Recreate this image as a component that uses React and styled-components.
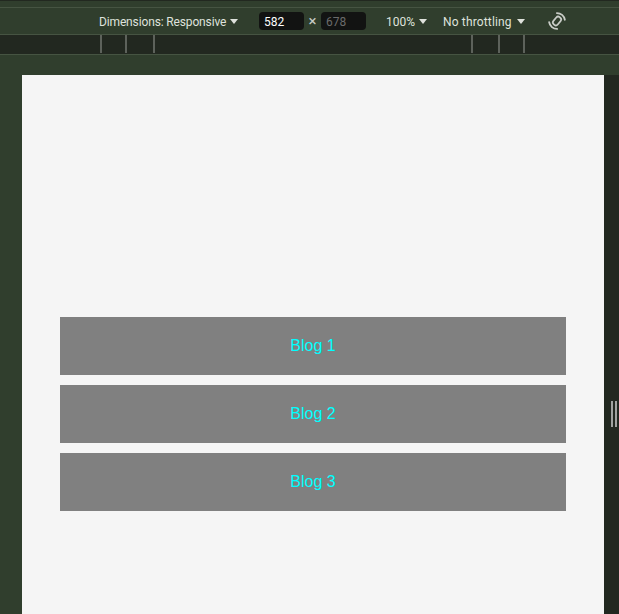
import React from "react";
import styled, { createGlobalStyle } from "styled-components";

const Global = createGlobalStyle`
  html, body { margin: 0; padding: 0; height: 100%; overflow: hidden; background: #303e2d; }
  #root { height: 100%; }
`;

const Shell = styled.div`
  width: 619px;
  height: 614px;
  display: flex;
  flex-direction: column;
  overflow: hidden;
  background: #303e2d;
  font-family: Roboto, "Noto Sans", sans-serif;
`;

const TopStrip = styled.div`
  height: 6px;
  flex: none;
  background: #303e2d;
  border-top: 1px solid #222820;
  border-bottom: 1px solid #465442;
`;

const Toolbar = styled.div`
  height: 26px;
  flex: none;
  display: flex;
  align-items: center;
  padding-left: 99px;
  color: #dfe2dc;
  font-size: 12px;
  border-bottom: 1px solid #465442;
`;

const Menu = styled.span`
  display: inline-flex;
  align-items: center;
  width: ${(p) => p.$width}px;
  margin-left: ${(p) => p.$gap || 0}px;
  flex: none;
  justify-content: space-between;
  white-space: nowrap;
  letter-spacing: ${(p) => p.$track || 0}px;
`;

const MenuLabel = styled.span`
  padding-top: 2px;
`;

const Caret = styled.span`
  width: 0;
  height: 0;
  flex: none;
  border-left: 4px solid transparent;
  border-right: 4px solid transparent;
  border-top: 5px solid #dfe2dc;
`;

const SizeBox = styled.span`
  width: 45px;
  height: 18px;
  flex: none;
  box-sizing: border-box;
  padding: 1px 0 0 5px;
  margin-left: ${(p) => p.$gap || 0}px;
  display: flex;
  align-items: center;
  border-radius: 4px;
  background: #121312;
  color: ${(p) => (p.$dim ? "#6b6b6b" : "#ffffff")};
`;

const Times = styled.span`
  width: 17px;
  flex: none;
  text-align: center;
  color: #c8ccc6;
  font-size: 15px;
`;

const RotateIcon = styled.svg`
  width: 20px;
  height: 20px;
  margin-left: 22px;
  flex: none;
`;

const Ruler = styled.div`
  height: 19px;
  flex: none;
  position: relative;
  background: #222820;
  border-bottom: 1px solid #465442;
`;

const Tick = styled.span`
  position: absolute;
  top: 0;
  bottom: 1px;
  width: 2px;
  background: #5d625b;
`;

const Stage = styled.div`
  flex: 1;
  min-height: 0;
  display: flex;
  align-items: flex-start;
  padding-top: 20px;
  padding-left: 22px;
`;

const Page = styled.div`
  width: 582px;
  height: 678px;
  flex: none;
  display: flex;
  flex-direction: column;
  gap: 10px;
  box-sizing: border-box;
  padding: 242px 38px 0;
  background: #f5f5f5;
`;

const Blog = styled.a`
  height: 58px;
  flex: none;
  display: flex;
  align-items: center;
  justify-content: center;
  background: #808080;
  color: #00ffff;
  font-family: "Liberation Sans", Arial, sans-serif;
  font-size: 16px;
`;

const Handle = styled.div`
  flex: 1;
  height: 678px;
  display: flex;
  align-items: center;
  justify-content: flex-end;
  gap: 2px;
  padding-right: 2px;
  background: #222820;
`;

const Grip = styled.span`
  width: 2px;
  height: 26px;
  background: #a0a3a0;
`;

export default function App() {
  return (
    <Shell>
      <Global />
      <TopStrip />
      <Toolbar>
        <Menu $width={139} $track={-0.14}><MenuLabel>Dimensions: Responsive</MenuLabel><Caret /></Menu>
        <SizeBox $gap={21}>582</SizeBox>
        <Times>×</Times>
        <SizeBox $dim>678</SizeBox>
        <Menu $gap={20} $width={41}><MenuLabel>100%</MenuLabel><Caret /></Menu>
        <Menu $gap={16} $width={82} $track={0.15}><MenuLabel>No throttling</MenuLabel><Caret /></Menu>
        <RotateIcon viewBox="0 0 20 20" fill="none" stroke="#c9ccc7" strokeLinecap="round">
          <g transform="rotate(40 10 10)">
            <rect x="7.2" y="5.4" width="5.6" height="9.2" rx="2.4" strokeWidth="1.7" />
            <path d="M4.8 4A8 8 0 0 1 15.2 4" strokeWidth="1.8" />
            <path d="M4.8 16A8 8 0 0 0 15.2 16" strokeWidth="1.8" />
          </g>
        </RotateIcon>
      </Toolbar>
      <Ruler>
        {[100, 125, 153, 471, 498, 523].map((x) => (
          <Tick key={x} style={{ left: x }} />
        ))}
      </Ruler>
      <Stage>
        <Page>
          <Blog>Blog 1</Blog>
          <Blog>Blog 2</Blog>
          <Blog>Blog 3</Blog>
        </Page>
        <Handle>
          <Grip />
          <Grip />
        </Handle>
      </Stage>
    </Shell>
  );
}
